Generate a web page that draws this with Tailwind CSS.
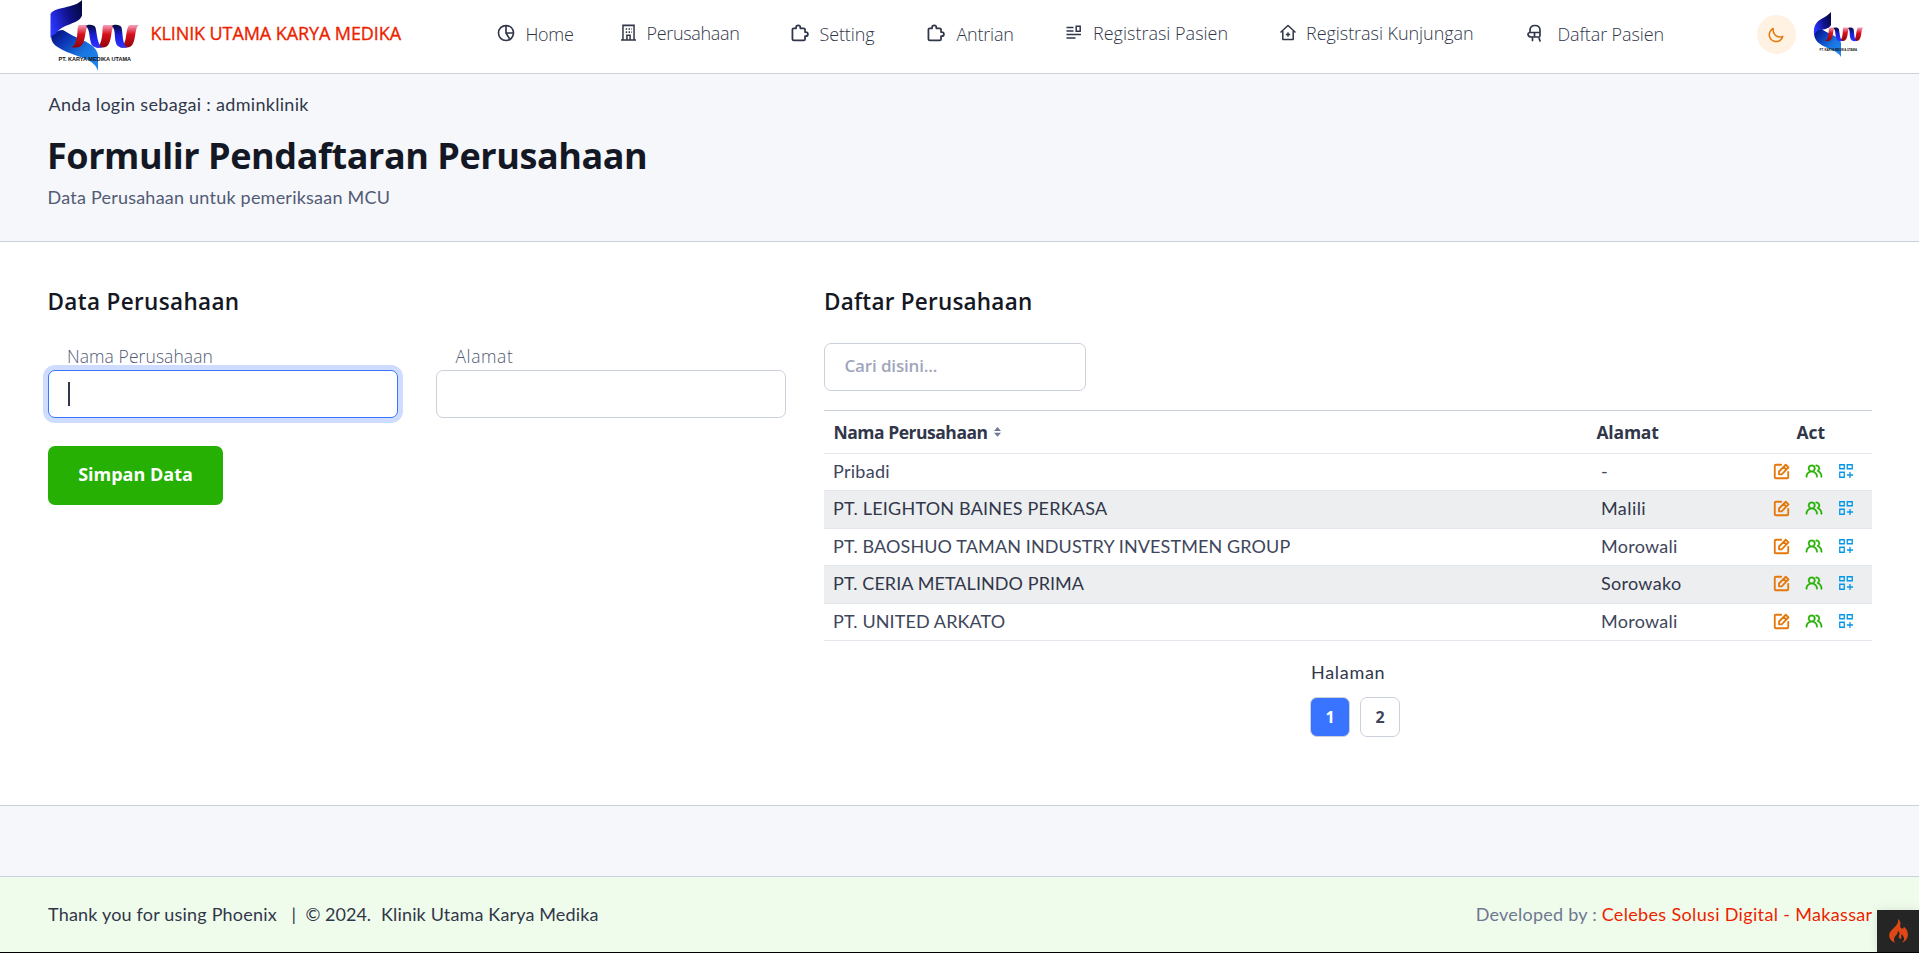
<!DOCTYPE html>
<html lang="id">
<head>
<meta charset="utf-8">
<title>Formulir Pendaftaran Perusahaan</title>
<script src="https://cdn.jsdelivr.net/npm/@tailwindcss/browser@4"></script>
</head>
<body class="h-[953px] overflow-hidden bg-white font-['Lato','Open_Sans',sans-serif] text-[18px] leading-[27px] text-[#31374a] whitespace-nowrap">

<!-- Shared icons -->
<svg class="absolute size-0">
  <defs>
    <linearGradient id="navy" x1="0" y1=".6" x2="1" y2=".2"><stop offset="0" stop-color="#2b36ff"/><stop offset=".55" stop-color="#10128c"/><stop offset="1" stop-color="#04093f"/></linearGradient>
    <linearGradient id="sky" x1="0" y1="0" x2="1" y2="1"><stop offset="0" stop-color="#050a6b"/><stop offset=".25" stop-color="#0a2fae"/><stop offset=".6" stop-color="#1a74e0"/><stop offset="1" stop-color="#1f8af0"/></linearGradient>
    <linearGradient id="red" gradientUnits="userSpaceOnUse" x1="0" y1="25" x2="0" y2="48"><stop offset="0" stop-color="#f5a3bd"/><stop offset=".4" stop-color="#d8101c"/><stop offset="1" stop-color="#8c0408"/></linearGradient>
    <linearGradient id="blue" gradientUnits="userSpaceOnUse" x1="0" y1="25" x2="0" y2="48"><stop offset="0" stop-color="#060a3c"/><stop offset=".45" stop-color="#1a1ed8"/><stop offset="1" stop-color="#2f35ff"/></linearGradient>
  </defs>
  <symbol id="helix" viewBox="0 0 100 76">
    <path fill="url(#red)" d="M39 25h10c-3 2-3 6-4 11-1 7-4 11.500-8 11.500h-6c4-2 5-5 6-11s0-10 2-11.500z"/>
    <path fill="url(#red)" d="M63.500 25H75c-3 2-3 6-4 11-1 7-3 11.500-8 11.500h-7c4-2 5-5 6-11s0-10 1.500-11.500z"/>
    <path fill="url(#red)" d="M89.500 25H99c-3 2-3 6-4 11-1 7-3 11.500-8 11.500h-7c4-2 5-5 6-11s1.500-10 3.500-11.500z"/>
    <path fill="url(#blue)" d="M46 26c2-2 8.500-1.500 9.500 1.500C57 33 57 44 62 47.500c-6 .8-10-.5-11-4.500-2-6-1-13-5-17z"/>
    <path fill="url(#blue)" d="M72 26c2-2 8.500-1.500 9.500 1.500C83 33 82 44 87 47.500c-6 .8-10-.5-11-4.500-2-6 0-13-4-17z"/>
  </symbol>
  <symbol id="edit" viewBox="0 0 24 24"><path fill="none" stroke="currentColor" stroke-width="2.600" stroke-linejoin="round" stroke-linecap="round" d="M11.500 2.500H4A1.500 1.500 0 0 0 2.500 4v16A1.500 1.500 0 0 0 4 21.500h16a1.500 1.500 0 0 0 1.500-1.500v-7.500M8.500 16v-4L18 2.500 21.800 6.300 12.300 16zM15 5.600l3.700 3.700"/></symbol>
  <symbol id="users" viewBox="0 0 24 24"><path fill="currentColor" stroke="currentColor" stroke-width=".4" d="M12.300,12.220A4.920,4.920,0,0,0,14,8.500a5,5,0,0,0-10,0,4.920,4.920,0,0,0,1.700,3.720A8,8,0,0,0,1,19.500a1,1,0,0,0,2,0,6,6,0,0,1,12,0,1,1,0,0,0,2,0A8,8,0,0,0,12.300,12.220ZM9,11.500a3,3,0,1,1,3-3A3,3,0,0,1,9,11.500Zm9.740.32A5,5,0,0,0,15,3.500a1,1,0,0,0,0,2,3,3,0,0,1,3,3,3,3,0,0,1-1.500,2.590,1,1,0,0,0-.5.84,1,1,0,0,0,.45.86l.39.26.13.07a7,7,0,0,1,4,6.380,1,1,0,0,0,2,0A9,9,0,0,0,18.740,11.820Z"/></symbol>
  <symbol id="grid" viewBox="0 0 14 14"><path fill="none" stroke="currentColor" stroke-width="1.300" d="M.75.75h4.500v4H.75zM8.250.75h5v4h-5zM.75 8.250h4.500v5H.75zM11 8v6M8 11h6"/></symbol>
  <symbol id="puzzle" viewBox="0 0 24 24"><path fill="none" stroke="currentColor" stroke-width="2.200" stroke-linejoin="round" d="M5 21.500a2 2 0 0 1-2-2V8a1.500 1.500 0 0 1 1.500-1.500H7.500V5.500a2.600 2.600 0 0 1 5.200 0v1H17A1.500 1.500 0 0 1 18.500 8v3.200h1a2.500 2.500 0 0 1 0 5h-1V20a1.500 1.500 0 0 1-1.500 1.500z"/></symbol>
</svg>

<header class="flex h-[74px] items-start border-b border-[#cbd0dd] bg-white">
  <svg class="ml-[40px] h-[76px] w-[100px] -mb-[2px] shrink-0" viewBox="0 0 100 76">
    <path fill="url(#sky)" d="M11 34c5-2 8-4 12-4 6 4 13 7 19 10 10 4 15 9 16 15v16c-2-6-6-9-12-12C36 55 24 52 16 46c-4-3-5-7-5-12z"/>
    <path fill="url(#navy)" d="M10.500 38V14C15 6 34 9 42 0v15.500c-3 9-20 8-26 18-2 1-4 2-5.500 4.500z"/>
    <use href="#helix" width="100" height="76"/>
    <text x="18.500" y="61" textLength="72.500" lengthAdjust="spacingAndGlyphs" font-family="Liberation Sans" font-weight="700" font-size="5.800" fill="#111">PT. KARYA MEDIKA UTAMA</text>
  </svg>
  <span class="mt-[20px] ml-[10.500px] w-[344px] font-['Open_Sans'] tracking-[-0.090px] text-[#ec1f00] [-webkit-text-stroke:0.350px_#ec1f00]">KLINIK UTAMA KARYA MEDIKA</span>
  <nav class="flex h-[73px] w-[1262px] items-start font-['Open_Sans'] font-light">
    <a class="flex w-[125px] items-start"><svg class="mt-[23px] ml-[1.500px] size-[20px]" viewBox="0 0 24 24"><path fill="currentColor" d="M12,2A10,10,0,1,0,22,12,10,10,0,0,0,12,2Zm1,2.070A8,8,0,0,1,19.930,11H13ZM4,12A8,8,0,0,1,11,4.070V12a1.100,1.100,0,0,0,.08.4.24.24,0,0,1,0,.08l4.200,6.800A7.870,7.870,0,0,1,12,20,8,8,0,0,1,4,12Zm13,6.240L13.800,13h6.130A8,8,0,0,1,17,18.240Z"/></svg><span class="mt-[21px] ml-[9.500px] tracking-[-0.330px]">Home</span></a>
    <a class="flex w-[170px] items-start"><svg class="mt-[23px] -ml-[1px] size-[19px]" viewBox="0 0 24 24"><path fill="none" stroke="currentColor" stroke-width="1.900" d="M2.500 21.500h19M5 21.500V3h14v18.500M10 21v-5.500h4V21"/><path stroke="currentColor" stroke-width="2" stroke-dasharray="1.800 1.800" d="M8.500 7.500h8M8.500 11.500h8"/></svg><span class="mt-[20px] ml-[9px] tracking-[-0.330px]">Perusahaan</span></a>
    <a class="flex w-[136px] items-start"><svg class="mt-[23px] ml-[0.500px] size-[19.500px]"><use href="#puzzle"/></svg><span class="mt-[21px] ml-[10px] tracking-[-0.120px]">Setting</span></a>
    <a class="flex w-[137px] items-start"><svg class="mt-[23px] ml-[0.500px] size-[19.500px]"><use href="#puzzle"/></svg><span class="mt-[21px] ml-[11px] tracking-[-0.210px]">Antrian</span></a>
    <a class="flex w-[213px] items-start"><svg class="mt-[25px] ml-[3.500px] h-[14px] w-[16px]" viewBox="0 0 16 14"><path fill="none" stroke="currentColor" stroke-width="1.500" d="M.5 2.500h7M.5 6h7M.5 9.500H15M.5 13h9M10.200 1.200h4v5h-4z"/></svg><span class="mt-[20px] ml-[11px]">Registrasi Pasien</span></a>
    <a class="flex w-[246px] items-start"><svg class="mt-[24px] ml-[4px] h-[17px] w-[16px]" viewBox="0 0 16 17"><path fill="none" stroke="currentColor" stroke-width="1.500" stroke-linejoin="round" stroke-linecap="round" d="M1 8l7-6.500L15 8M2.800 7v8.500h10.400V7"/><path stroke="currentColor" stroke-width="1.400" d="M8 8.300v4.400M5.800 10.500h4.400"/></svg><span class="mt-[20px] ml-[10.500px] tracking-[-0.050px]">Registrasi Kunjungan</span></a>
    <a class="flex items-start"><svg class="mt-[24px] ml-[5px] h-[18px] w-[15px]" viewBox="0 0 15 18"><path fill="none" stroke="currentColor" stroke-width="1.700" stroke-linejoin="round" stroke-linecap="round" d="M3 8.500V6.500C3 3.500 5 1.500 8 1.500s5 2 5 5v5c0 1-.6 1.500-1.500 1.500H5C2.500 13 1 11.800 1 10.200S2 8.500 3.500 8.500H13M7.500 9v4M5.500 13v3.500M11.800 13l1.200 4"/></svg><span class="mt-[21px] ml-[16px] tracking-[-0.110px]">Daftar Pasien</span></a>
  </nav>
  <button class="mt-[15px] flex size-[39px] shrink-0 items-center justify-center rounded-full bg-[#fff2e2] text-[#e5780b]"><svg class="size-[18px]" viewBox="0 0 24 24"><path fill="currentColor" d="M21.640,13a1,1,0,0,0-1.050-.14,8.050,8.050,0,0,1-3.370.73A8.150,8.150,0,0,1,9.080,5.490a8.590,8.590,0,0,1,.25-2A1,1,0,0,0,8,2.360,10.140,10.140,0,1,0,22,14.050,1,1,0,0,0,21.640,13Zm-9.500,6.690A8.140,8.140,0,0,1,7.080,5.220v.27A10.150,10.150,0,0,0,17.220,15.630a9.790,9.790,0,0,0,2.100-.22A8.110,8.110,0,0,1,12.140,19.730Z"/></svg></button>
  <svg class="mt-[11px] ml-[17px] h-[47px] w-[52px] shrink-0" viewBox="0 0 52 47">
    <path fill="url(#sky)" d="M1 20c3-1 5-2 8-2 5 5 18 7 19 14v14c-4-8-20-9-25-17-2-3-2-6-2-9z"/>
    <path fill="url(#navy)" d="M1 24C0 14 4 10 10 7c4-2 6-4 8-6v13C16 19 8 18 4 20z"/>
    <g transform="translate(-5.500 1.500) scale(.565 .6)"><use href="#helix" width="100" height="76"/></g>
    <text x="6.500" y="40" textLength="37.500" lengthAdjust="spacingAndGlyphs" font-family="Liberation Sans" font-weight="700" font-size="3.200" fill="#111">PT. KARYA MEDIKA UTAMA</text>
  </svg>
</header>

<section class="flex h-[168px] flex-col items-start border-b border-[#cbd0dd] bg-[#f5f7fa] pt-[17px] pl-[48px]">
  <p class="ml-[0.500px] tracking-[0.300px]">Anda login sebagai : adminklinik</p>
  <h1 class="mt-[16px] -ml-[1px] font-['Open_Sans'] text-[36px] leading-[44px] font-bold tracking-[-0.440px] text-[#141824]">Formulir Pendaftaran Perusahaan</h1>
  <p class="mt-[6px] -ml-[0.500px] tracking-[0.220px] text-[#525b75]">Data Perusahaan untuk pemeriksaan MCU</p>
</section>

<main class="flex h-[564px] items-start gap-[38px] border-b border-[#cbd0dd] bg-white pt-[45px] pr-[47px] pl-[48px]">
  <section class="w-[738px] shrink-0">
    <h2 class="-ml-[0.500px] font-['Open_Sans'] text-[22.500px] leading-[30px] font-semibold tracking-[0.340px] text-[#141824]">Data Perusahaan</h2>
    <div class="mt-[25px] grid grid-cols-2 gap-[38px] font-['Open_Sans'] text-[17.500px] font-light text-[#525b75]">
      <label class="flex flex-col"><span class="mt-px pl-[19px] tracking-[0.080px]">Nama Perusahaan</span>
        <span class="flex h-[48px] items-center rounded-[7px] border border-[#3874ff] bg-white pl-[19px] ring-[5px] ring-[#cddcff]"><span class="h-[24px] w-[2px] bg-[#31374a]"></span></span></label>
      <label class="flex flex-col"><span class="mt-px pl-[19.500px] tracking-[0.600px]">Alamat</span>
        <span class="h-[48px] rounded-[7px] border border-[#cbd0dd] bg-white"></span></label>
    </div>
    <button class="mt-[28px] flex h-[59px] w-[175px] items-center justify-center rounded-[7px] bg-[#25b003] pb-[2px] font-['Open_Sans'] font-bold text-white">Simpan Data</button>
  </section>

  <section class="flex-1">
    <h2 class="font-['Open_Sans'] text-[22.500px] leading-[30px] font-semibold tracking-[0.220px] text-[#141824]">Daftar Perusahaan</h2>
    <div class="mt-[26px] flex h-[48px] w-[262px] items-center rounded-[7px] border border-[#cbd0dd] pl-[19.500px] font-['Open_Sans'] text-[17px] font-semibold tracking-[-0.150px] text-[#9fa6bc]"><span class="-mt-[4px]">Cari disini...</span></div>

    <div class="mt-[19px] border-t border-[#cbd0dd]">
      <div class="flex h-[43px] items-start border-b border-[#e3e6ed] pt-[8px] font-['Open_Sans'] text-[17.500px] font-bold">
        <div class="flex w-[772.500px] items-center pl-[9.500px]"><span class="tracking-[-0.480px]">Nama Perusahaan</span><svg class="mb-[2px] ml-[6px] h-[10px] w-[7px]" viewBox="0 0 7 10"><path fill="#6e7891" d="M3.500 0L7 4H0zM0 5.800h7L3.500 9.800z"/></svg></div>
        <div class="w-[200px] tracking-[-0.200px]">Alamat</div>
        <div class="tracking-[-0.040px]">Act</div>
      </div>
      <div class="flex h-[37px] items-start border-b border-[#e3e6ed] pt-[4px] text-[#3e465b]"><span class="w-[777px] pl-[9px] tracking-[0.280px]">Pribadi</span><span class="w-[171.500px]">-</span><svg class="mt-[5px] size-[17px] text-[#e5780b]"><use href="#edit"/></svg><svg class="mt-[4px] ml-[15px] h-[18px] w-[18px] text-[#25b003]"><use href="#users"/></svg><svg class="mt-[6px] ml-[16.500px] size-[14px] text-[#0097eb]"><use href="#grid"/></svg></div>
      <div class="flex h-[38px] items-start border-b border-[#e3e6ed] bg-[#edeef0] pt-[4px] text-[#31374a]"><span class="w-[777px] pl-[9px] tracking-[0.200px]">PT. LEIGHTON BAINES PERKASA</span><span class="w-[171.500px] tracking-[0.420px]">Malili</span><svg class="mt-[5px] size-[17px] text-[#e5780b]"><use href="#edit"/></svg><svg class="mt-[4px] ml-[15px] h-[18px] w-[18px] text-[#25b003]"><use href="#users"/></svg><svg class="mt-[6px] ml-[16.500px] size-[14px] text-[#0097eb]"><use href="#grid"/></svg></div>
      <div class="flex h-[37px] items-start border-b border-[#e3e6ed] pt-[4px] text-[#3e465b]"><span class="w-[777px] pl-[9px] tracking-[0.110px]">PT. BAOSHUO TAMAN INDUSTRY INVESTMEN GROUP</span><span class="w-[171.500px] tracking-[0.270px]">Morowali</span><svg class="mt-[5px] size-[17px] text-[#e5780b]"><use href="#edit"/></svg><svg class="mt-[4px] ml-[15px] h-[18px] w-[18px] text-[#25b003]"><use href="#users"/></svg><svg class="mt-[6px] ml-[16.500px] size-[14px] text-[#0097eb]"><use href="#grid"/></svg></div>
      <div class="flex h-[38px] items-start border-b border-[#e3e6ed] bg-[#edeef0] pt-[4px] text-[#31374a]"><span class="w-[777px] pl-[9px] tracking-[0.070px]">PT. CERIA METALINDO PRIMA</span><span class="w-[171.500px] tracking-[0.300px]">Sorowako</span><svg class="mt-[5px] size-[17px] text-[#e5780b]"><use href="#edit"/></svg><svg class="mt-[4px] ml-[15px] h-[18px] w-[18px] text-[#25b003]"><use href="#users"/></svg><svg class="mt-[6px] ml-[16.500px] size-[14px] text-[#0097eb]"><use href="#grid"/></svg></div>
      <div class="flex h-[37px] items-start border-b border-[#e3e6ed] pt-[4px] text-[#3e465b]"><span class="w-[777px] pl-[9px] tracking-[0.100px]">PT. UNITED ARKATO</span><span class="w-[171.500px] tracking-[0.270px]">Morowali</span><svg class="mt-[5px] size-[17px] text-[#e5780b]"><use href="#edit"/></svg><svg class="mt-[4px] ml-[15px] h-[18px] w-[18px] text-[#25b003]"><use href="#users"/></svg><svg class="mt-[6px] ml-[16.500px] size-[14px] text-[#0097eb]"><use href="#grid"/></svg></div>
    </div>

    <div class="mt-[18px] ml-[486px]">
      <p class="ml-px tracking-[0.700px]">Halaman</p>
      <div class="mt-[11px] flex gap-[10px] font-['Open_Sans'] text-[16px] font-bold">
        <span class="flex size-[40px] items-center justify-center rounded-[7px] border border-[#cbd0dd] bg-[#3874ff] text-white">1</span>
        <span class="flex size-[40px] items-center justify-center rounded-[7px] border border-[#cbd0dd] text-[#3e465b]">2</span>
      </div>
    </div>
  </section>
</main>

<div class="h-[71px] border-b border-[#cbd0dd] bg-[#f5f7fa]"></div>

<footer class="relative flex h-[76px] items-start border-b border-black bg-[#f0fceb] pt-[24px] pr-[46.500px] pl-[48px]">
  <span class="w-[243.500px] tracking-[0.190px]">Thank you for using Phoenix</span>
  <span class="w-[14px]">|</span>
  <span class="w-[75.500px]">© 2024.</span>
  <span class="tracking-[0.150px]">Klinik Utama Karya Medika</span>
  <span class="ml-auto w-[126px] tracking-[0.240px] text-[#6e7891]">Developed by :</span>
  <span class="tracking-[0.340px] text-[#ec1f00]">Celebes Solusi Digital - Makassar</span>
  <div class="absolute right-0 bottom-0 flex h-[42px] w-[42px] items-center justify-center bg-[#252525] shadow-[0_0_10px_rgba(0,0,0,0.1)]">
    <svg class="h-[24px] w-[19px]" viewBox="0 0 19 24"><path fill="#dd4814" d="M6.200 23.800C1.500 22 0 18.800.2 15.800.5 12.500 3 10.800 5.800 8 8.300 5.500 9.600 3.200 9 0c2.200 1.600 2.800 4 2.300 6-.4 2 .3 3.400 1.800 3.600 1.600.2 2-1.200 1.400-2.200 2.800 1.800 4.500 5 4.400 8.300-.1 3.800-2.400 6.700-6.200 8.100 2.100-1.700 2.700-3.300 2.300-5-.4-1.500-1.700-2.200-2-3.800-.9.700-1.100 2-.6 3.200.4 1.100-.7 2-1.700 1.400-1.400-.8-.9-2.500-.3-4 .6-1.700-.2-3.200-1.600-3.700.2 2.600-1 3.500-2.400 5-1.800 2-2 4.600-.2 6.900z"/></svg>
  </div>
</footer>
</body>
</html>
